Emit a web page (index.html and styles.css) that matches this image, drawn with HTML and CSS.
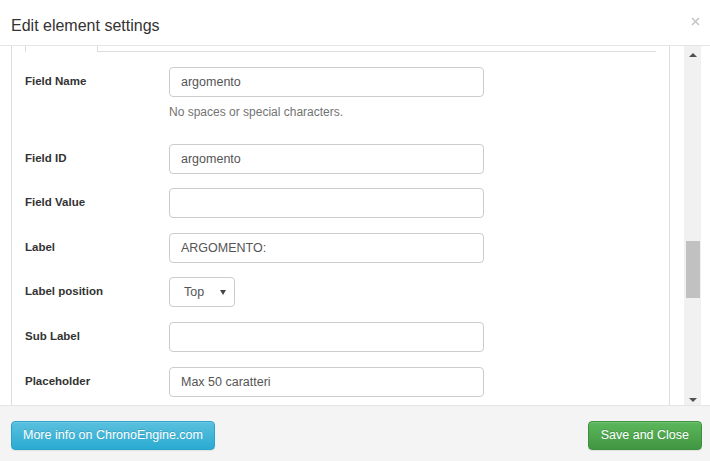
FILE: index.html
```html
<!DOCTYPE html>
<html>
<head>
<meta charset="utf-8">
<link rel="stylesheet" href="styles.css">
</head>
<body>
<div class="modal">
  <div class="modal-header">
    <h4 class="modal-title">Edit element settings</h4>
    <svg class="close" width="9" height="9" viewBox="0 0 9 9"><path d="M1 1L8 8M8 1L1 8" stroke="#c6c6c6" stroke-width="1.6" fill="none"/></svg>
  </div>
  <div class="modal-body">
    <div class="scroll-view">
      <div class="panel">
        <div class="tabs"><div class="tab-active"></div><div class="tab-line"></div></div>
        <div class="form">
          <div class="row">
            <label class="lbl">Field Name</label>
            <div class="ctl">
              <div class="input">argomento</div>
              <div class="help">No spaces or special characters.</div>
            </div>
          </div>
          <div class="row">
            <label class="lbl">Field ID</label>
            <div class="ctl"><div class="input">argomento</div></div>
          </div>
          <div class="row">
            <label class="lbl">Field Value</label>
            <div class="ctl"><div class="input"></div></div>
          </div>
          <div class="row">
            <label class="lbl">Label</label>
            <div class="ctl"><div class="input">ARGOMENTO:</div></div>
          </div>
          <div class="row">
            <label class="lbl">Label position</label>
            <div class="ctl"><div class="select"><span>Top</span><span class="caret"></span></div></div>
          </div>
          <div class="row">
            <label class="lbl">Sub Label</label>
            <div class="ctl"><div class="input"></div></div>
          </div>
          <div class="row">
            <label class="lbl">Placeholder</label>
            <div class="ctl"><div class="input">Max 50 caratteri</div></div>
          </div>
        </div>
      </div>
    </div>
    <div class="scrollbar">
      <div class="sb-btn"><span class="sb-up"></span></div>
      <div class="sb-track"><div class="sb-thumb"></div></div>
      <div class="sb-btn"><span class="sb-down"></span></div>
    </div>
  </div>
  <div class="modal-footer">
    <button class="btn btn-info">More info on ChronoEngine.com</button>
    <button class="btn btn-success">Save and Close</button>
  </div>
</div>
</body>
</html>
```
FILE: styles.css
```css
html, body {
  margin: 0;
  padding: 0;
  background: #fff;
}
body {
  font-family: "Liberation Sans", Arial, sans-serif;
  color: #333;
  width: 710px;
  height: 461px;
  overflow: hidden;
}
.modal {
  display: flex;
  flex-direction: column;
  height: 461px;
}
.modal-header {
  box-sizing: border-box;
  border-bottom: 1px solid #e5e5e5;
  height: 46px;
  display: flex;
  justify-content: space-between;
  align-items: flex-start;
  padding: 0 10px 0 11px;
}
.modal-title {
  margin: 16px 0 0 0;
  font-size: 16px;
  line-height: 20px;
  font-weight: normal;
  color: #333;
}
.close {
  margin-top: 17px;
  display: block;
}
.modal-body {
  height: 359px;
  display: flex;
}
.scroll-view {
  flex: 1;
  overflow: hidden;
  padding: 0 14px 0 11px;
}
.panel {
  border-left: 1px solid #ddd;
  border-right: 1px solid #ddd;
  height: 100%;
  box-sizing: border-box;
  padding: 0 13px;
}
.tabs {
  display: flex;
  height: 6px;
}
.tab-active {
  width: 71px;
  border-left: 1px solid #ddd;
  border-right: 1px solid #ddd;
}
.tab-line {
  flex: 1;
  border-bottom: 1px solid #ddd;
}
.form {
  padding-top: 15px;
}
.row {
  display: flex;
  margin-bottom: 14.6px;
}
.lbl {
  width: 144px;
  flex: none;
  font-weight: bold;
  font-size: 11.5px;
  line-height: 17px;
  padding-top: 6px;
  color: #333;
}
.input {
  width: 315px;
  height: 30px;
  box-sizing: border-box;
  border: 1px solid #ccc;
  border-radius: 4px;
  padding: 0 11px;
  font-size: 12.5px;
  line-height: 28px;
  color: #555;
  background: #fff;
}
.help {
  margin-top: 7px;
  margin-bottom: 8px;
  font-size: 12px;
  line-height: 17px;
  color: #737373;
}
.select {
  width: 66px;
  height: 30px;
  box-sizing: border-box;
  border: 1px solid #ccc;
  border-radius: 4px;
  padding: 0 8px 0 14px;
  font-size: 12.5px;
  line-height: 28px;
  color: #555;
  display: flex;
  justify-content: space-between;
  align-items: center;
}
.caret {
  width: 0;
  height: 0;
  border-left: 3px solid transparent;
  border-right: 3px solid transparent;
  border-top: 5px solid #444;
  margin-top: 1px;
}
.scrollbar {
  width: 17px;
  margin-right: 9px;
  background: #f1f1f1;
  display: flex;
  flex-direction: column;
}
.sb-btn {
  height: 17px;
  display: flex;
  align-items: center;
  justify-content: center;
}
.sb-up {
  width: 0;
  height: 0;
  border-left: 4px solid transparent;
  border-right: 4px solid transparent;
  border-bottom: 4px solid #505050;
  margin-top: 1px;
}
.sb-down {
  width: 0;
  height: 0;
  border-left: 4px solid transparent;
  border-right: 4px solid transparent;
  border-top: 4px solid #505050;
  margin-top: 6px;
}
.sb-track {
  flex: 1;
  padding: 0 1px 0 2px;
}
.sb-thumb {
  margin-top: 178px;
  height: 57px;
  background: #c1c1c1;
}
.modal-footer {
  flex: 1;
  border-top: 1px solid #e5e5e5;
  background: #f4f4f4;
  display: flex;
  justify-content: space-between;
  align-items: flex-start;
  padding: 15px 8px 0 11px;
}
.btn {
  height: 29px;
  box-sizing: border-box;
  font-family: "Liberation Sans", Arial, sans-serif;
  font-size: 12.5px;
  color: #fff;
  border-radius: 4px;
  line-height: 27px;
  cursor: pointer;
  text-shadow: 0 -1px 0 rgba(0,0,0,0.15);
  box-shadow: inset 0 1px 0 rgba(255,255,255,0.15), 0 1px 1px rgba(0,0,0,0.075);
}
.btn-info {
  padding: 0 11px;
  background: linear-gradient(to bottom, #5bc0de 0%, #2aabd2 100%);
  border: 1px solid #28a4c9;
}
.btn-success {
  padding: 0 12px;
  background: linear-gradient(to bottom, #5cb85c 0%, #419641 100%);
  border: 1px solid #3e8f3e;
}
```
